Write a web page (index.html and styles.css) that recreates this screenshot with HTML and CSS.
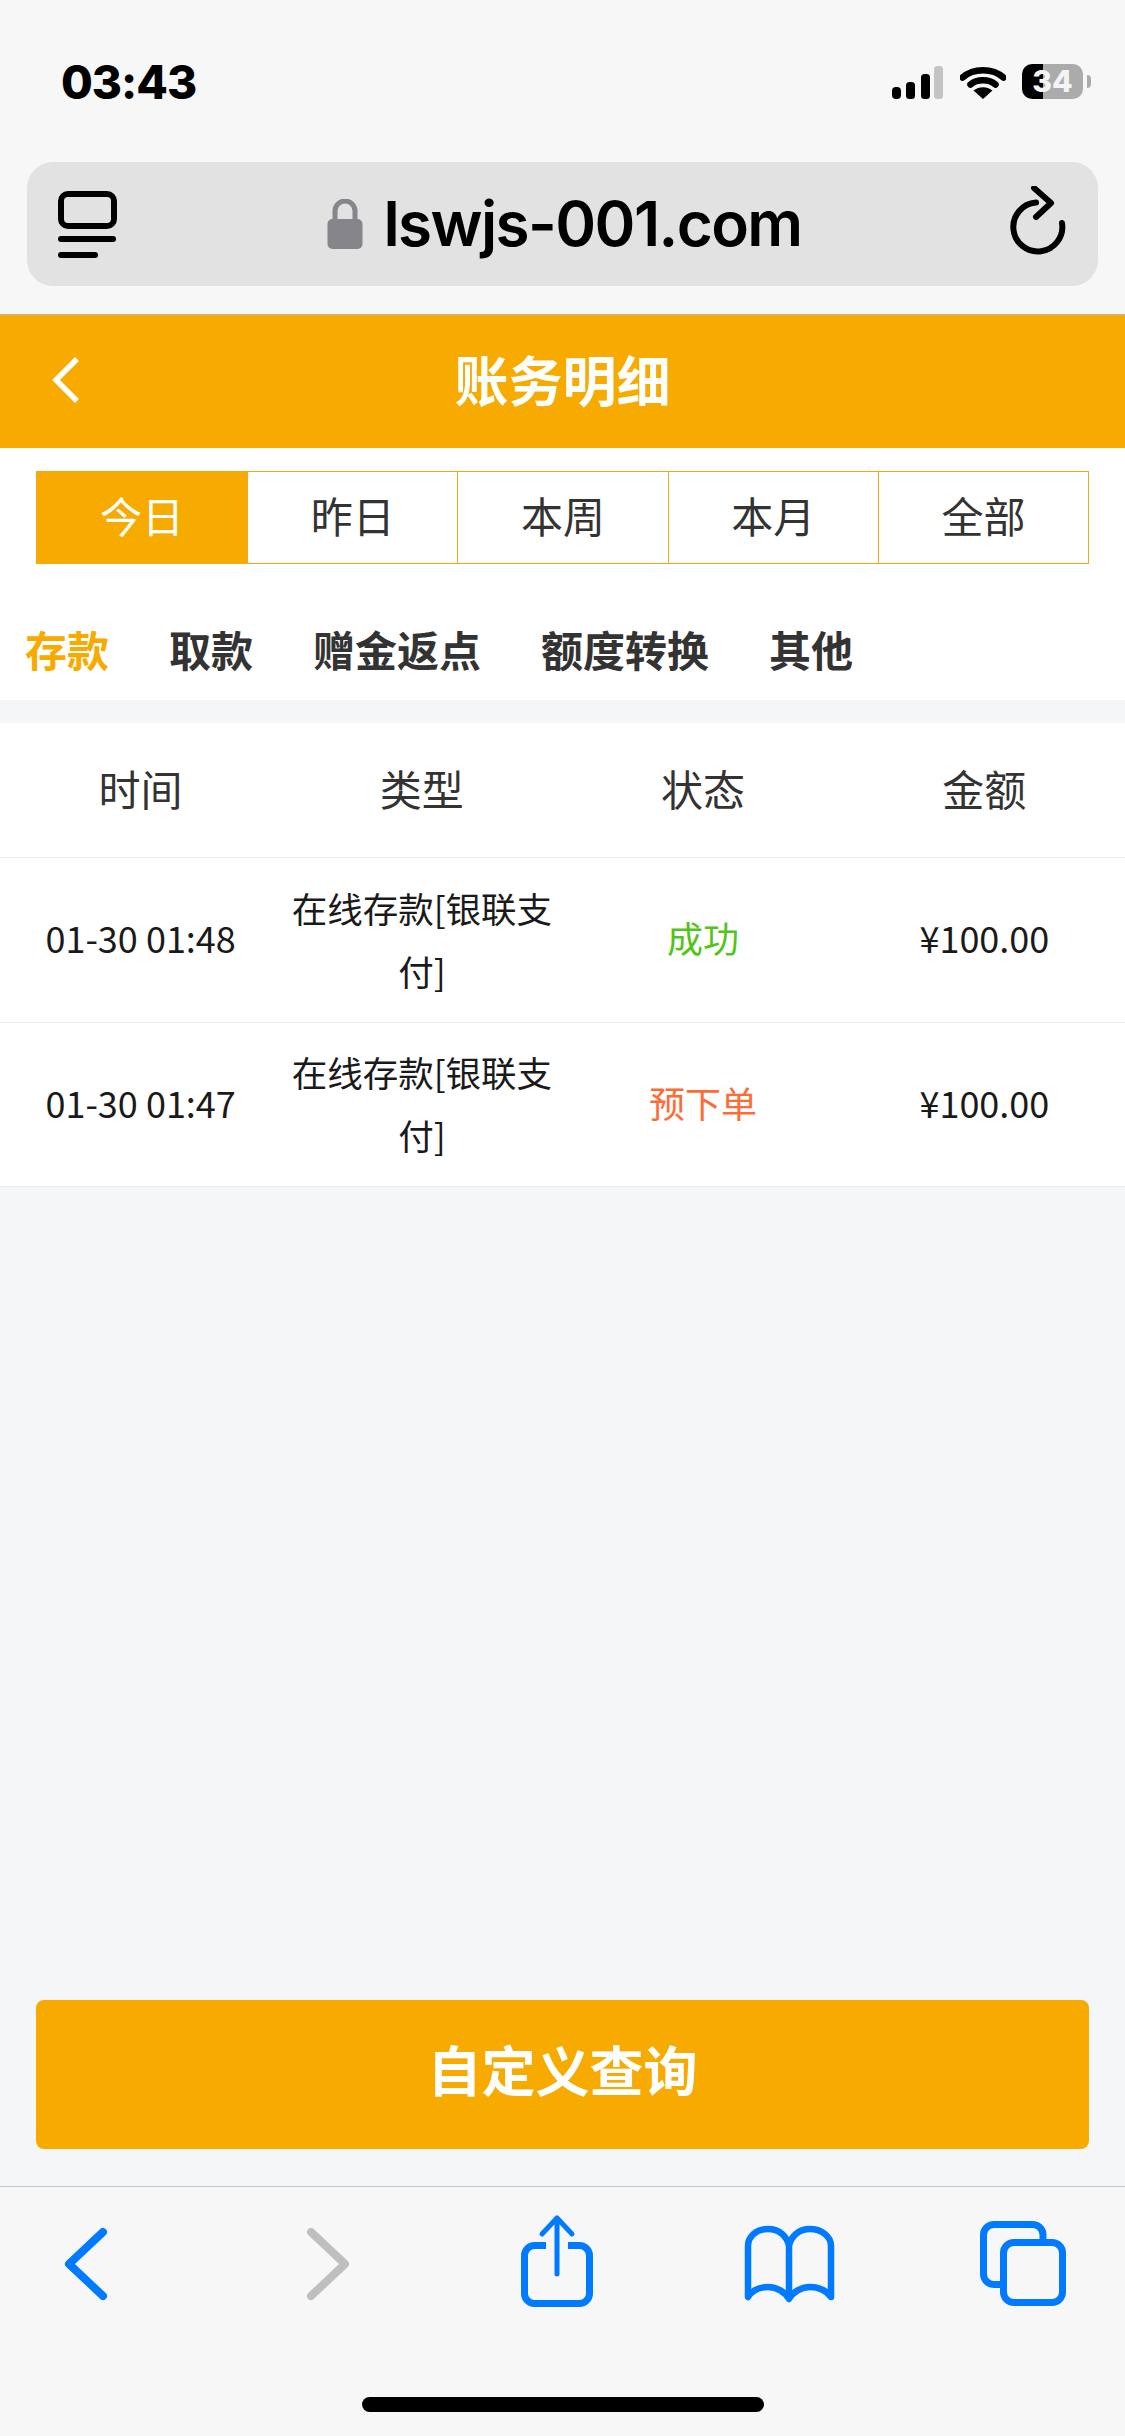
FILE: index.html
```html
<!DOCTYPE html>
<html lang="zh-CN">
<head>
<meta charset="utf-8">
<title>账务明细</title>
<link rel="stylesheet" href="styles.css">
</head>
<body>
<div class="chrome">
  <div class="status">
    <span class="clock">03:43</span>
    <div class="indicators">
      <svg class="signal" width="52" height="34" viewBox="0 0 52 34"><rect x="0" y="21" width="9" height="12" rx="4" fill="#000"/><rect x="14" y="16" width="9" height="17" rx="3.5" fill="#000"/><rect x="29" y="8" width="9" height="25" rx="3.5" fill="#000"/><rect x="42" y="0" width="9" height="33" rx="3.5" fill="#c4c4c4"/></svg>
      <svg class="wifi" width="46" height="33" viewBox="0 0 46 33"><path d="M2.5 11.5C13.500 1.800 32.500 1.800 43.500 11.500" fill="none" stroke="#000" stroke-width="6.500" stroke-linecap="round"/><path d="M10.500 18.500C17 12.800 29 12.800 35.500 18.500" fill="none" stroke="#000" stroke-width="6.500" stroke-linecap="round"/><path d="M13.500 24.500C19 20 27 20 32.500 24.500L23 33Z" fill="#000"/></svg>
      <div class="battery"><span class="battery-level">34</span></div>
      <span class="battery-nub"></span>
    </div>
  </div>
  <div class="address">
    <svg class="tab-icon" width="60" height="70" viewBox="0 0 60 70"><rect x="3" y="3" width="53" height="32" rx="7" fill="none" stroke="#000" stroke-width="6"/><rect x="0" y="45" width="58" height="6" rx="3" fill="#000"/><rect x="0" y="61" width="40" height="6" rx="3" fill="#000"/></svg>
    <div class="url">
      <svg class="lock" width="36" height="50" viewBox="0 0 36 50"><path d="M8 22V12a10 10 0 0 1 20 0V22" fill="none" stroke="#85858a" stroke-width="5"/><rect x="0.500" y="20" width="35" height="30" rx="5" fill="#85858a"/></svg>
      <span class="url-text">lswjs-001.com</span>
    </div>
    <svg class="reload" width="60" height="70" viewBox="0 0 60 70"><path d="M53 37A24.500 24.500 0 1 1 27 16.500" fill="none" stroke="#000" stroke-width="6" stroke-linecap="round"/><path d="M25 2L42 17L27 31" fill="none" stroke="#000" stroke-width="6" stroke-linecap="round" stroke-linejoin="round"/></svg>
  </div>
</div>

<main class="page">
  <header class="titlebar">
    <svg class="title-back" width="30" height="48" viewBox="0 0 30 48"><path d="M26 3L5 24L26 45" fill="none" stroke="#fff" stroke-width="5.500"/></svg>
    <h1 class="title">账务明细</h1>
  </header>

  <section class="filters">
    <div class="segments">
      <div class="segment is-active">今日</div>
      <div class="segment">昨日</div>
      <div class="segment">本周</div>
      <div class="segment">本月</div>
      <div class="segment">全部</div>
    </div>
    <nav class="tabs">
      <span class="tab is-active">存款</span>
      <span class="tab">取款</span>
      <span class="tab">赠金返点</span>
      <span class="tab">额度转换</span>
      <span class="tab">其他</span>
    </nav>
  </section>

  <section class="ledger">
    <div class="row row-head">
      <div class="cell">时间</div>
      <div class="cell">类型</div>
      <div class="cell">状态</div>
      <div class="cell">金额</div>
    </div>
    <div class="row">
      <div class="cell">01-30 01:48</div>
      <div class="cell cell-wrap">在线存款[银联支付]</div>
      <div class="cell ok">成功</div>
      <div class="cell">¥100.00</div>
    </div>
    <div class="row row-last">
      <div class="cell">01-30 01:47</div>
      <div class="cell cell-wrap">在线存款[银联支付]</div>
      <div class="cell pending">预下单</div>
      <div class="cell">¥100.00</div>
    </div>
  </section>

  <button class="query" type="button">自定义查询</button>
</main>

<footer class="toolbar">
  <div class="tool-row">
    <svg class="tool" width="100" height="100" viewBox="0 0 100 100"><path d="M68 20L34 52L68 84" fill="none" stroke="#007aff" stroke-width="8" stroke-linecap="round" stroke-linejoin="round"/></svg>
    <svg class="tool" width="100" height="100" viewBox="0 0 100 100"><path d="M42 20L76 52L42 84" fill="none" stroke="#bfbfbf" stroke-width="8" stroke-linecap="round" stroke-linejoin="round"/></svg>
    <svg class="tool" width="100" height="100" viewBox="0 0 100 100"><path d="M43 33.500H31.500a10 10 0 0 0 -10 10V81.500a10 10 0 0 0 10 10H76.500a10 10 0 0 0 10 -10V43.500a10 10 0 0 0 -10 -10H65" fill="none" stroke="#007aff" stroke-width="7"/><path d="M54 6V62M39 22L54 6L69 22" fill="none" stroke="#007aff" stroke-width="5" stroke-linecap="round" stroke-linejoin="round"/></svg>
    <svg class="tool" width="100" height="100" viewBox="0 0 100 100"><path d="M11 85V34C11 24 20 17 31 17C42 17 50 24 52 34C54 24 62 17 73 17C84 17 94 24 94 34V85C88 77 80 75 73 75C64 75 56 80 52 87C48 80 40 75 31 75C24 75 16 77 11 85ZM52 34V85" fill="none" stroke="#007aff" stroke-width="6.500" stroke-linejoin="round"/></svg>
    <svg class="tool" width="100" height="100" viewBox="0 0 100 100"><path d="M72 28V23a10.500 10.500 0 0 0 -10.500 -10.500H23a10.500 10.500 0 0 0 -10.500 10.500V62a10.500 10.500 0 0 0 10.500 10.500H29" fill="none" stroke="#007aff" stroke-width="7"/><rect x="32.500" y="30.500" width="59" height="60" rx="10.500" fill="none" stroke="#007aff" stroke-width="7"/></svg>
  </div>
  <div class="home-indicator"></div>
</footer>
</body>
</html>
```

FILE: styles.css
```css
* {
  box-sizing: border-box;
}

html,
body {
  margin: 0;
  height: 100%;
}

body {
  width: 1125px;
  height: 2436px;
  display: flex;
  flex-direction: column;
  background: #f5f6f8;
  color: #333;
  font-family: "Noto Sans CJK SC", "Noto Sans", sans-serif;
  overflow: hidden;
}

/* Browser chrome */
.chrome {
  height: 315px;
  flex: none;
  background: #f7f7f7;
  border-bottom: 1px solid #bdb8ad;
}

.status {
  height: 162px;
  padding: 60px 34px 0 61px;
  display: flex;
  justify-content: space-between;
  align-items: flex-start;
}

.clock {
  font-family: Inter, "Liberation Sans", sans-serif;
  font-weight: 800;
  font-size: 46px;
  line-height: 44px;
  letter-spacing: -1px;
  color: #000;
}

.indicators {
  display: flex;
  align-items: flex-start;
  padding-top: 5px;
}

.signal {
  margin-top: 1px;
}

.wifi {
  margin-left: 16px;
  margin-top: 1px;
}

.battery {
  width: 61px;
  height: 35px;
  margin-left: 16px;
  margin-top: -1px;
  border-radius: 10px;
  background: linear-gradient(90deg, #000 34%, #ababab 34%);
  display: flex;
  align-items: center;
  justify-content: center;
}

.battery-level {
  font-family: Inter, "Liberation Sans", sans-serif;
  font-weight: 800;
  font-size: 30px;
  line-height: 35px;
  color: #f4f4f4;
}

.battery-nub {
  width: 4px;
  height: 13px;
  margin: 10px 0 0 4px;
  border-radius: 0 4px 4px 0;
  background: #ababab;
}

.address {
  height: 124px;
  margin: 0 27px;
  padding: 0 31px;
  border-radius: 26px;
  background: #e2e2e2;
  display: flex;
  align-items: center;
  justify-content: space-between;
}

.tab-icon {
  margin-top: 4px;
}

.reload {
  margin-right: -2px;
  margin-bottom: 6px;
}

.url {
  display: flex;
  align-items: center;
  gap: 20px;
  margin-left: 2px;
}

.url-text {
  font-family: Inter, "Liberation Sans", sans-serif;
  font-weight: 600;
  font-size: 62px;
  line-height: 70px;
  letter-spacing: -1.6px;
  color: #000;
}

/* Page */
.page {
  flex: 1;
  min-height: 0;
  display: flex;
  flex-direction: column;
}

.titlebar {
  height: 133px;
  flex: none;
  padding-bottom: 6px;
  background: #f7ab00;
  display: flex;
  align-items: center;
  justify-content: center;
  position: relative;
}

.title-back {
  position: absolute;
  left: 51px;
  top: 41px;
}

.title {
  margin: 0;
  font-size: 54px;
  font-weight: 700;
  line-height: 64px;
  color: #fff;
}

.filters {
  flex: none;
  background: #fff;
  padding-top: 23px;
  height: 252px;
}

.segments {
  height: 93px;
  margin: 0 36px;
  border: 1px solid #efa91a;
  display: grid;
  grid-template-columns: repeat(5, 1fr);
}

.segment {
  display: flex;
  align-items: center;
  justify-content: center;
  padding-bottom: 6px;
  font-size: 42px;
  color: #333;
  border-left: 1px solid #efa91a;
}

.segment:first-child {
  border-left: 0;
}

.segment.is-active {
  background: #f7ab00;
  color: #fff;
}

.tabs {
  display: flex;
  gap: 60px;
  padding: 61px 0 0 25px;
}

.tab {
  font-size: 42px;
  line-height: 48px;
  font-weight: 700;
  color: #333;
}

.tab.is-active {
  color: #f7ab00;
}

.ledger {
  flex: none;
  margin-top: 23px;
  background: #fff;
}

.row {
  height: 165px;
  display: grid;
  grid-template-columns: repeat(4, 1fr);
  border-bottom: 1px solid #eeeeee;
  font-size: 36px;
  line-height: 63px;
  color: #1a1a1a;
}

.row-head {
  height: 135px;
  font-size: 42px;
  color: #333;
}

.row-last {
  height: 164px;
}

.cell {
  display: flex;
  align-items: center;
  justify-content: center;
  text-align: center;
  padding: 0 6px 5px;
}

.cell-wrap {
  padding-bottom: 3px;
  font-size: 35.5px;
}

.cell.ok {
  color: #52c41a;
}

.cell.pending {
  color: #ff6b35;
}

.query {
  flex: none;
  height: 149px;
  margin: auto 36px 37px;
  padding: 0 0 12px;
  border: 0;
  border-radius: 8px;
  background: #f7ab00;
  color: #fff;
  font-family: inherit;
  font-size: 54px;
  font-weight: 700;
}

/* Browser toolbar */
.toolbar {
  flex: none;
  height: 250px;
  background: #f7f7f7;
  border-top: 1px solid #c4c4c4;
  padding-top: 25px;
  display: flex;
  flex-direction: column;
}

.tool-row {
  display: flex;
  gap: 134px;
  padding-left: 35px;
}

.tool {
  flex: none;
}

.home-indicator {
  width: 402px;
  height: 15px;
  margin: 85px auto 0;
  border-radius: 8px;
  background: #000;
}
```
